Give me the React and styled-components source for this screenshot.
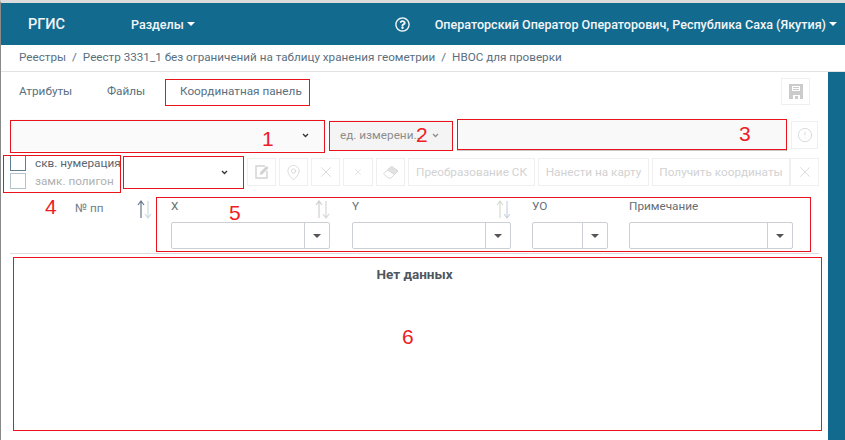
import React from 'react'
import styled, { createGlobalStyle } from 'styled-components'
import { CircleAlert, MapPin, X } from 'lucide-react'
import { FaRegQuestionCircle } from 'react-icons/fa'

const GlobalStyle = createGlobalStyle`
  html, body { margin: 0; padding: 0; background: #fff; }
  body { font-family: Roboto, "Liberation Sans", sans-serif; font-size: 11.75px; color: #5c6670; }
  * { box-sizing: border-box; }
`

const Page = styled.div`
  position: relative;
  width: 845px;
  height: 440px;
  overflow: hidden;
  border-top: 3px solid #dcdcdc;
  border-left: 1px solid #8a8a8a;
`

const Header = styled.header`
  display: flex;
  align-items: center;
  height: 42px;
  background: #136a8f;
  color: #f2f6f8;
`

const Brand = styled.div`
  width: 130px;
  padding-left: 27px;
  font-size: 14.5px;
  font-weight: 500;
`

const NavItem = styled.div`
  display: flex;
  align-items: center;
  gap: 3px;
  font-size: 12.55px;
  font-weight: 500;
`

const Caret = styled.span`
  display: inline-block;
  border-top: 4px solid ${(p) => p.$color || '#fff'};
  border-left: 4px solid transparent;
  border-right: 4px solid transparent;
`

const HeaderRight = styled.div`
  display: flex;
  align-items: center;
  margin-left: auto;
  padding-right: 8px;
  gap: 25px;
`

const Crumbs = styled.nav`
  display: flex;
  gap: 6px;
  height: 27px;
  align-items: center;
  padding: 0 0 2px 18px;
  border-bottom: 1px solid #e2e2e2;
  font-size: 11.68px;
  color: #5a6f80;
`

const Body = styled.div`
  display: flex;
  height: 368px;
`

const Content = styled.main`
  width: 827px;
  padding: 0 9px;
`

const Sidebar = styled.aside`
  width: 17px;
  background: #136a8f;
`

const Tabs = styled.div`
  display: flex;
  align-items: center;
  height: 47px;
  padding: 0 0 9px 9px;
`

const Tab = styled.span`
  width: ${(p) => p.$width}px;
  padding-left: ${(p) => p.$pad || 0}px;
  color: #5a6f80;
`

const IconButton = styled.button`
  display: flex;
  align-items: center;
  justify-content: center;
  flex: none;
  width: ${(p) => p.$width || 29}px;
  height: 28px;
  padding: 0;
  background: #fff;
  border: 1px solid #efefef;
  color: #d2d2d2;
  font-family: inherit;
  font-size: 11.75px;
`

const SaveButton = styled(IconButton)`
  margin-left: auto;
  margin-right: 9px;
  height: 27px;
  width: 29px;
`

const JoinedButton = styled(IconButton)`
  margin-left: -3px;
`

const TopRow = styled.div`
  display: flex;
  align-items: center;
  height: 32px;
  gap: 4px;
`

const Select = styled.div`
  display: flex;
  align-items: center;
  justify-content: flex-end;
  flex: none;
  width: ${(p) => p.$width}px;
  height: ${(p) => p.$height || 32}px;
  padding-right: ${(p) => p.$pad || 16}px;
  background: #fafafa;
  color: #333;
`

const UnitSelect = styled(Select)`
  justify-content: space-between;
  height: 30px;
  padding: 0 14px 0 11px;
  background: #f4f4f4;
  color: #8d8d8d;
`

const Field = styled.div`
  flex: none;
  width: 330px;
  height: 31px;
  background: #f9f9f9;
  border-right: 1px solid #8d8d8d;
  border-bottom: 1px solid #c8c8c8;
`

const ToolRow = styled.div`
  display: flex;
  align-items: center;
  height: 36px;
  margin-top: 4px;
  padding-bottom: 2px;
  gap: 3px;
`

const Checks = styled.div`
  display: grid;
  grid-template-columns: 16px auto;
  column-gap: 9px;
  row-gap: 2px;
  align-items: center;
  flex: none;
  width: 110px;
  align-self: flex-start;
`

const Check = styled.span`
  display: block;
  width: 16px;
  height: 16px;
  border: 1px solid ${(p) => (p.$muted ? '#b4c2cc' : '#5d7f92')};
`

const CheckLabel = styled.span`
  white-space: nowrap;
  color: ${(p) => (p.$muted ? '#b0b0b0' : '#5a6672')};
`

const ToolSelect = styled(Select)`
  background: #fff;
  margin-right: 1px;
`

const HeadRow = styled.div`
  display: flex;
  height: 58px;
  margin-top: 5px;
  border-bottom: 1px solid #dddddd;
`

const NumHead = styled.div`
  display: flex;
  flex: none;
  width: 161px;
  padding: 4px 0 0 65px;
`

const NumLabel = styled.span`
  width: 62px;
  line-height: 14px;
  margin-top: 1px;
  color: #6f7f8c;
`

const Column = styled.div`
  flex: none;
  width: ${(p) => p.$width}px;
  margin-right: ${(p) => p.$gap}px;
`

const ColumnTop = styled.div`
  display: flex;
  justify-content: space-between;
  height: 26px;
  padding-top: 4px;
  line-height: 13px;
  color: #666e75;
`

const Combo = styled.div`
  display: flex;
  height: 27px;
  border: 1px solid #cccfd3;
  border-radius: 2px;
  background: #fff;
`

const ComboInput = styled.div`
  flex: 1;
`

const ComboToggle = styled.div`
  display: flex;
  align-items: center;
  justify-content: center;
  width: 25px;
  border-left: 1px solid #cccfd3;
`

const Empty = styled.div`
  padding-top: 12px;
  text-align: center;
  font-size: 13.5px;
  font-weight: 700;
  color: #4f5660;
`

const Mark = styled.div`
  position: absolute;
  left: ${(p) => p.$x}px;
  top: ${(p) => p.$y}px;
  width: ${(p) => p.$w}px;
  height: ${(p) => p.$h}px;
  border: 1px solid #e8141c;
  pointer-events: none;
`

const MarkNumber = styled.span`
  position: absolute;
  left: ${(p) => p.$x}px;
  top: ${(p) => p.$y}px;
  font-family: "Liberation Sans", sans-serif;
  font-size: 21px;
  line-height: 24px;
  color: #ee1c25;
`

const SortIcon = ({ up = '#66788f', down = '#cfdbe3' }) => (
  <svg width='15' height='19' viewBox='0 0 15 19' fill='none' strokeWidth='1.2'>
    <path d='M4 18V1M1 5l3-4 3 4' stroke={up} />
    <path d='M11 1v17M8 14l3 4 3-4' stroke={down} />
  </svg>
)

const Chevron = ({ color = '#333' }) => (
  <svg width='7' height='5' viewBox='0 0 7 5' fill='none'>
    <path d='M1 1l2.5 2.5L6 1' stroke={color} strokeWidth='1.3' />
  </svg>
)

const SaveIcon = () => (
  <svg width='14' height='15' viewBox='0 0 14 15'>
    <path
      fillRule='evenodd'
      fill='#cbcbcb'
      d='M0 0h14v15h-3v-4H4v4H0zM3 2v5h8V2zM4 3h6v1H4zM4 5h6v1H4zM6 12h3v3H6z'
    />
  </svg>
)

const EditIcon = () => (
  <svg width='14' height='14' viewBox='0 0 14 14' fill='none' stroke='#d2d2d2'>
    <path d='M10 1H1v12h11V6' strokeWidth='1.4' />
    <path d='M5 9.5l.6-2.4L11.5 1.2l1.8 1.8-5.9 5.9z' fill='#d2d2d2' strokeWidth='0.6' />
  </svg>
)

const EraserIcon = () => (
  <svg width='18' height='16' viewBox='0 0 18 16' fill='none' stroke='#dadada' strokeWidth='1'>
    <path d='M1.5 9.5L9.5 2.5l6.5 4.5-7 7h-3z' />
    <path d='M5.5 6L9.5 2.5 16 7l-3.5 3.5z' fill='#e2e2e2' />
  </svg>
)

const columns = [
  { label: 'X', width: 159, gap: 22, sort: { up: '#cfcfcf', down: '#d8d8d8' } },
  { label: 'Y', width: 159, gap: 21, sort: { up: '#d5dcd0', down: '#c9d4e0' } },
  { label: 'УО', width: 76, gap: 21 },
  { label: 'Примечание', width: 164, gap: 0 }
]

const marks = [
  { x: 9, y: 117, w: 315, h: 33 },
  { x: 328, y: 118, w: 124, h: 30 },
  { x: 456, y: 116, w: 330, h: 31 },
  { x: 2, y: 152, w: 118, h: 38 },
  { x: 122, y: 153, w: 121, h: 33 },
  { x: 155, y: 194, w: 655, h: 55 },
  { x: 12, y: 254, w: 809, h: 174 },
  { x: 164, y: 76, w: 145, h: 27 }
]

const numbers = [
  { n: 1, x: 261, y: 124 },
  { n: 2, x: 415, y: 120 },
  { n: 3, x: 738, y: 119 },
  { n: 4, x: 44, y: 192 },
  { n: 5, x: 228, y: 198 },
  { n: 6, x: 401, y: 322 }
]

const App = () => (
  <>
    <GlobalStyle />
    <Page>
      <Header>
        <Brand>РГИС</Brand>
        <NavItem>
          Разделы <Caret />
        </NavItem>
        <HeaderRight>
          <FaRegQuestionCircle size={15} />
          <NavItem>
            Операторский Оператор Операторович, Республика Саха (Якутия) <Caret />
          </NavItem>
        </HeaderRight>
      </Header>
      <Crumbs>
        <span>Реестры</span>
        <span>/</span>
        <span>Реестр 3331_1 без ограничений на таблицу хранения геометрии</span>
        <span>/</span>
        <span>НВОС для проверки</span>
      </Crumbs>
      <Body>
        <Content>
          <Tabs>
            <Tab $width={88}>Атрибуты</Tab>
            <Tab $width={58}>Файлы</Tab>
            <Tab $width={170} $pad={15}>Координатная панель</Tab>
            <SaveButton>
              <SaveIcon />
            </SaveButton>
          </Tabs>
          <TopRow>
            <Select $width={315}>
              <Chevron />
            </Select>
            <UnitSelect $width={124}>
              ед. измерени...
              <Chevron color='#8d8d8d' />
            </UnitSelect>
            <Field />
            <IconButton $width={27}>
              <CircleAlert size={16} strokeWidth={1.2} />
            </IconButton>
          </TopRow>
          <ToolRow>
            <Checks>
              <Check />
              <CheckLabel>скв. нумерация</CheckLabel>
              <Check $muted />
              <CheckLabel $muted>замк. полигон</CheckLabel>
            </Checks>
            <ToolSelect $width={120} $pad={15}>
              <Chevron />
            </ToolSelect>
            <IconButton>
              <EditIcon />
            </IconButton>
            <IconButton>
              <MapPin size={17} strokeWidth={1.1} />
            </IconButton>
            <IconButton>
              <X size={18} strokeWidth={1} />
            </IconButton>
            <IconButton $width={30}>
              <X size={10} strokeWidth={1.4} />
            </IconButton>
            <IconButton>
              <EraserIcon />
            </IconButton>
            <IconButton $width={127}>Преобразование СК</IconButton>
            <IconButton $width={111}>Нанести на карту</IconButton>
            <IconButton $width={138}>Получить координаты</IconButton>
            <JoinedButton>
              <X size={18} strokeWidth={1} />
            </JoinedButton>
          </ToolRow>
          <HeadRow>
            <NumHead>
              <NumLabel>№ пп</NumLabel>
              <SortIcon />
            </NumHead>
            {columns.map((c) => (
              <Column key={c.label} $width={c.width} $gap={c.gap}>
                <ColumnTop>
                  {c.label}
                  {c.sort && <SortIcon {...c.sort} />}
                </ColumnTop>
                <Combo>
                  <ComboInput />
                  <ComboToggle>
                    <Caret $color='#555' />
                  </ComboToggle>
                </Combo>
              </Column>
            ))}
          </HeadRow>
          <Empty>Нет данных</Empty>
        </Content>
        <Sidebar />
      </Body>
      {marks.map((m) => (
        <Mark key={`${m.x}-${m.y}`} $x={m.x} $y={m.y} $w={m.w} $h={m.h} />
      ))}
      {numbers.map((m) => (
        <MarkNumber key={m.n} $x={m.x} $y={m.y}>
          {m.n}
        </MarkNumber>
      ))}
    </Page>
  </>
)

export default App
